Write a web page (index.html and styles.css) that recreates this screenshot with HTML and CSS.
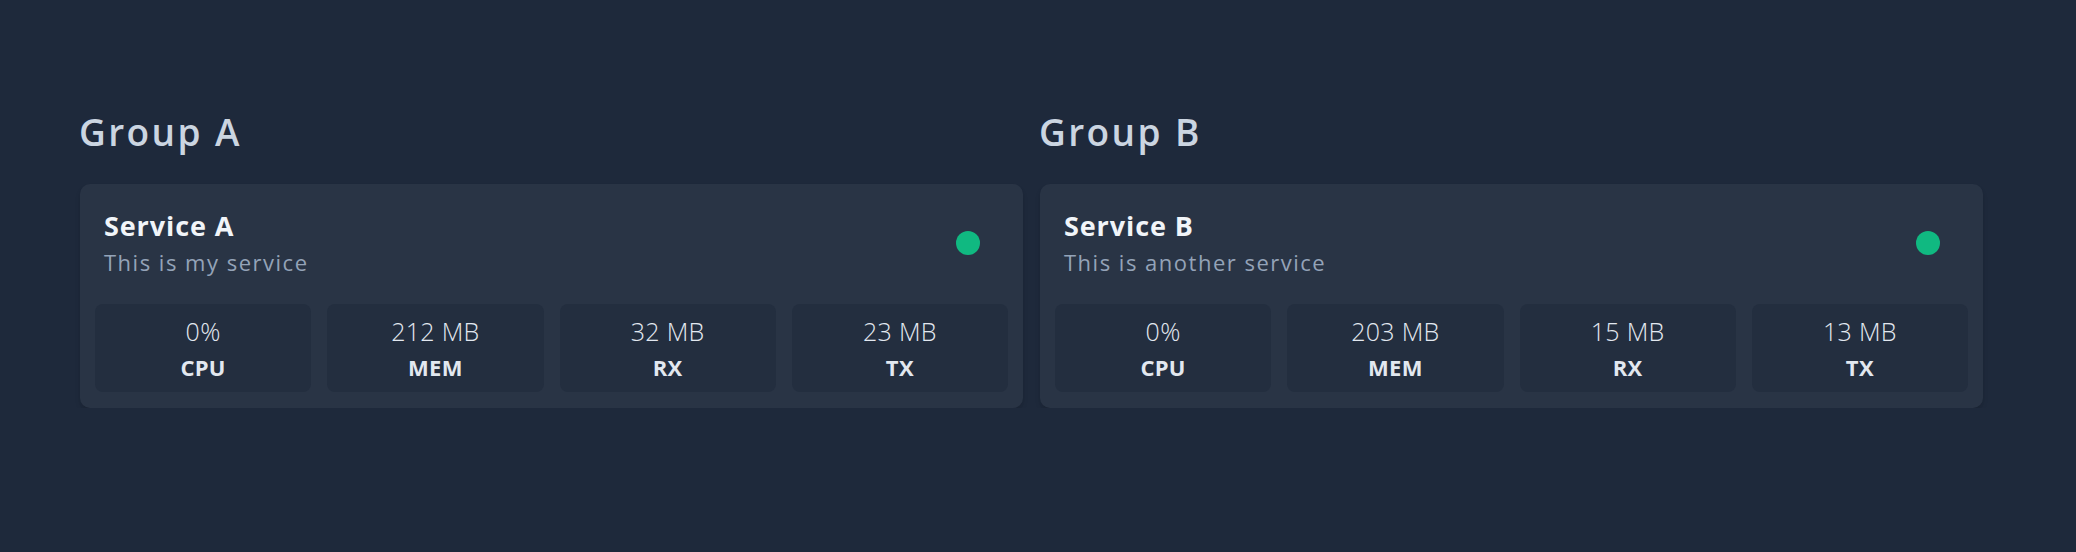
FILE: index.html
```html
<!DOCTYPE html>
<html lang="en">
<head>
<meta charset="utf-8">
<title>Dashboard</title>
<link rel="stylesheet" href="styles.css">
</head>
<body>
<main class="groups">
  <section class="group">
    <h2 class="group-title">Group A</h2>
    <div class="card">
      <div class="card-head">
        <div class="card-text">
          <div class="service-name">Service A</div>
          <div class="service-desc">This is my service</div>
        </div>
        <span class="status-dot"></span>
      </div>
      <div class="stats">
        <div class="stat"><div class="stat-value">0%</div><div class="stat-label">CPU</div></div>
        <div class="stat"><div class="stat-value">212 MB</div><div class="stat-label">MEM</div></div>
        <div class="stat"><div class="stat-value">32 MB</div><div class="stat-label">RX</div></div>
        <div class="stat"><div class="stat-value">23 MB</div><div class="stat-label">TX</div></div>
      </div>
    </div>
  </section>
  <section class="group">
    <h2 class="group-title">Group B</h2>
    <div class="card">
      <div class="card-head">
        <div class="card-text">
          <div class="service-name">Service B</div>
          <div class="service-desc">This is another service</div>
        </div>
        <span class="status-dot"></span>
      </div>
      <div class="stats">
        <div class="stat"><div class="stat-value">0%</div><div class="stat-label">CPU</div></div>
        <div class="stat"><div class="stat-value">203 MB</div><div class="stat-label">MEM</div></div>
        <div class="stat"><div class="stat-value">15 MB</div><div class="stat-label">RX</div></div>
        <div class="stat"><div class="stat-value">13 MB</div><div class="stat-label">TX</div></div>
      </div>
    </div>
  </section>
</main>
</body>
</html>
```

FILE: styles.css
```css
html, body {
  margin: 0;
  padding: 0;
  background: #1e293b;
  font-family: "Open Sans", "Noto Sans", sans-serif;
}

.groups {
  display: grid;
  grid-template-columns: 943px 943px;
  column-gap: 17px;
  padding: 110px 0 0 80px;
}

.group-title {
  margin: 0 0 30px -1px;
  font-size: 37px;
  line-height: 44px;
  font-weight: 600;
  color: #cbd5e1;
  letter-spacing: 2.4px;
}

.card {
  background: #293445;
  border-radius: 10px;
  box-shadow: 0 4px 6px -1px rgba(0, 0, 0, 0.12), 0 2px 4px -2px rgba(0, 0, 0, 0.1);
  padding: 24px 15px 16px 15px;
}

.card-head {
  display: flex;
  align-items: center;
  justify-content: space-between;
  padding: 0 28px 0 9px;
}

.service-name {
  font-size: 27px;
  line-height: 36px;
  font-weight: 700;
  color: #f1f5f9;
  letter-spacing: 0.9px;
}

.service-desc {
  margin-top: 2px;
  font-size: 22px;
  line-height: 32px;
  font-weight: 400;
  color: #94a3b8;
  letter-spacing: 1.5px;
}

.status-dot {
  width: 24px;
  height: 24px;
  border-radius: 50%;
  background: #10b981;
}

.stats {
  display: flex;
  gap: 16px;
  margin-top: 26px;
}

.stat {
  flex: 1;
  background: #232e3f;
  border-radius: 8px;
  padding: 11px 0;
  text-align: center;
}

.stat-value {
  font-size: 25px;
  line-height: 32px;
  font-weight: 300;
  color: #e2e8f0;
  letter-spacing: 0.3px;
}

.stat-label {
  margin-top: 6px;
  font-size: 22px;
  line-height: 28px;
  font-weight: 700;
  color: #e2e8f0;
  letter-spacing: 0.3px;
}
```
